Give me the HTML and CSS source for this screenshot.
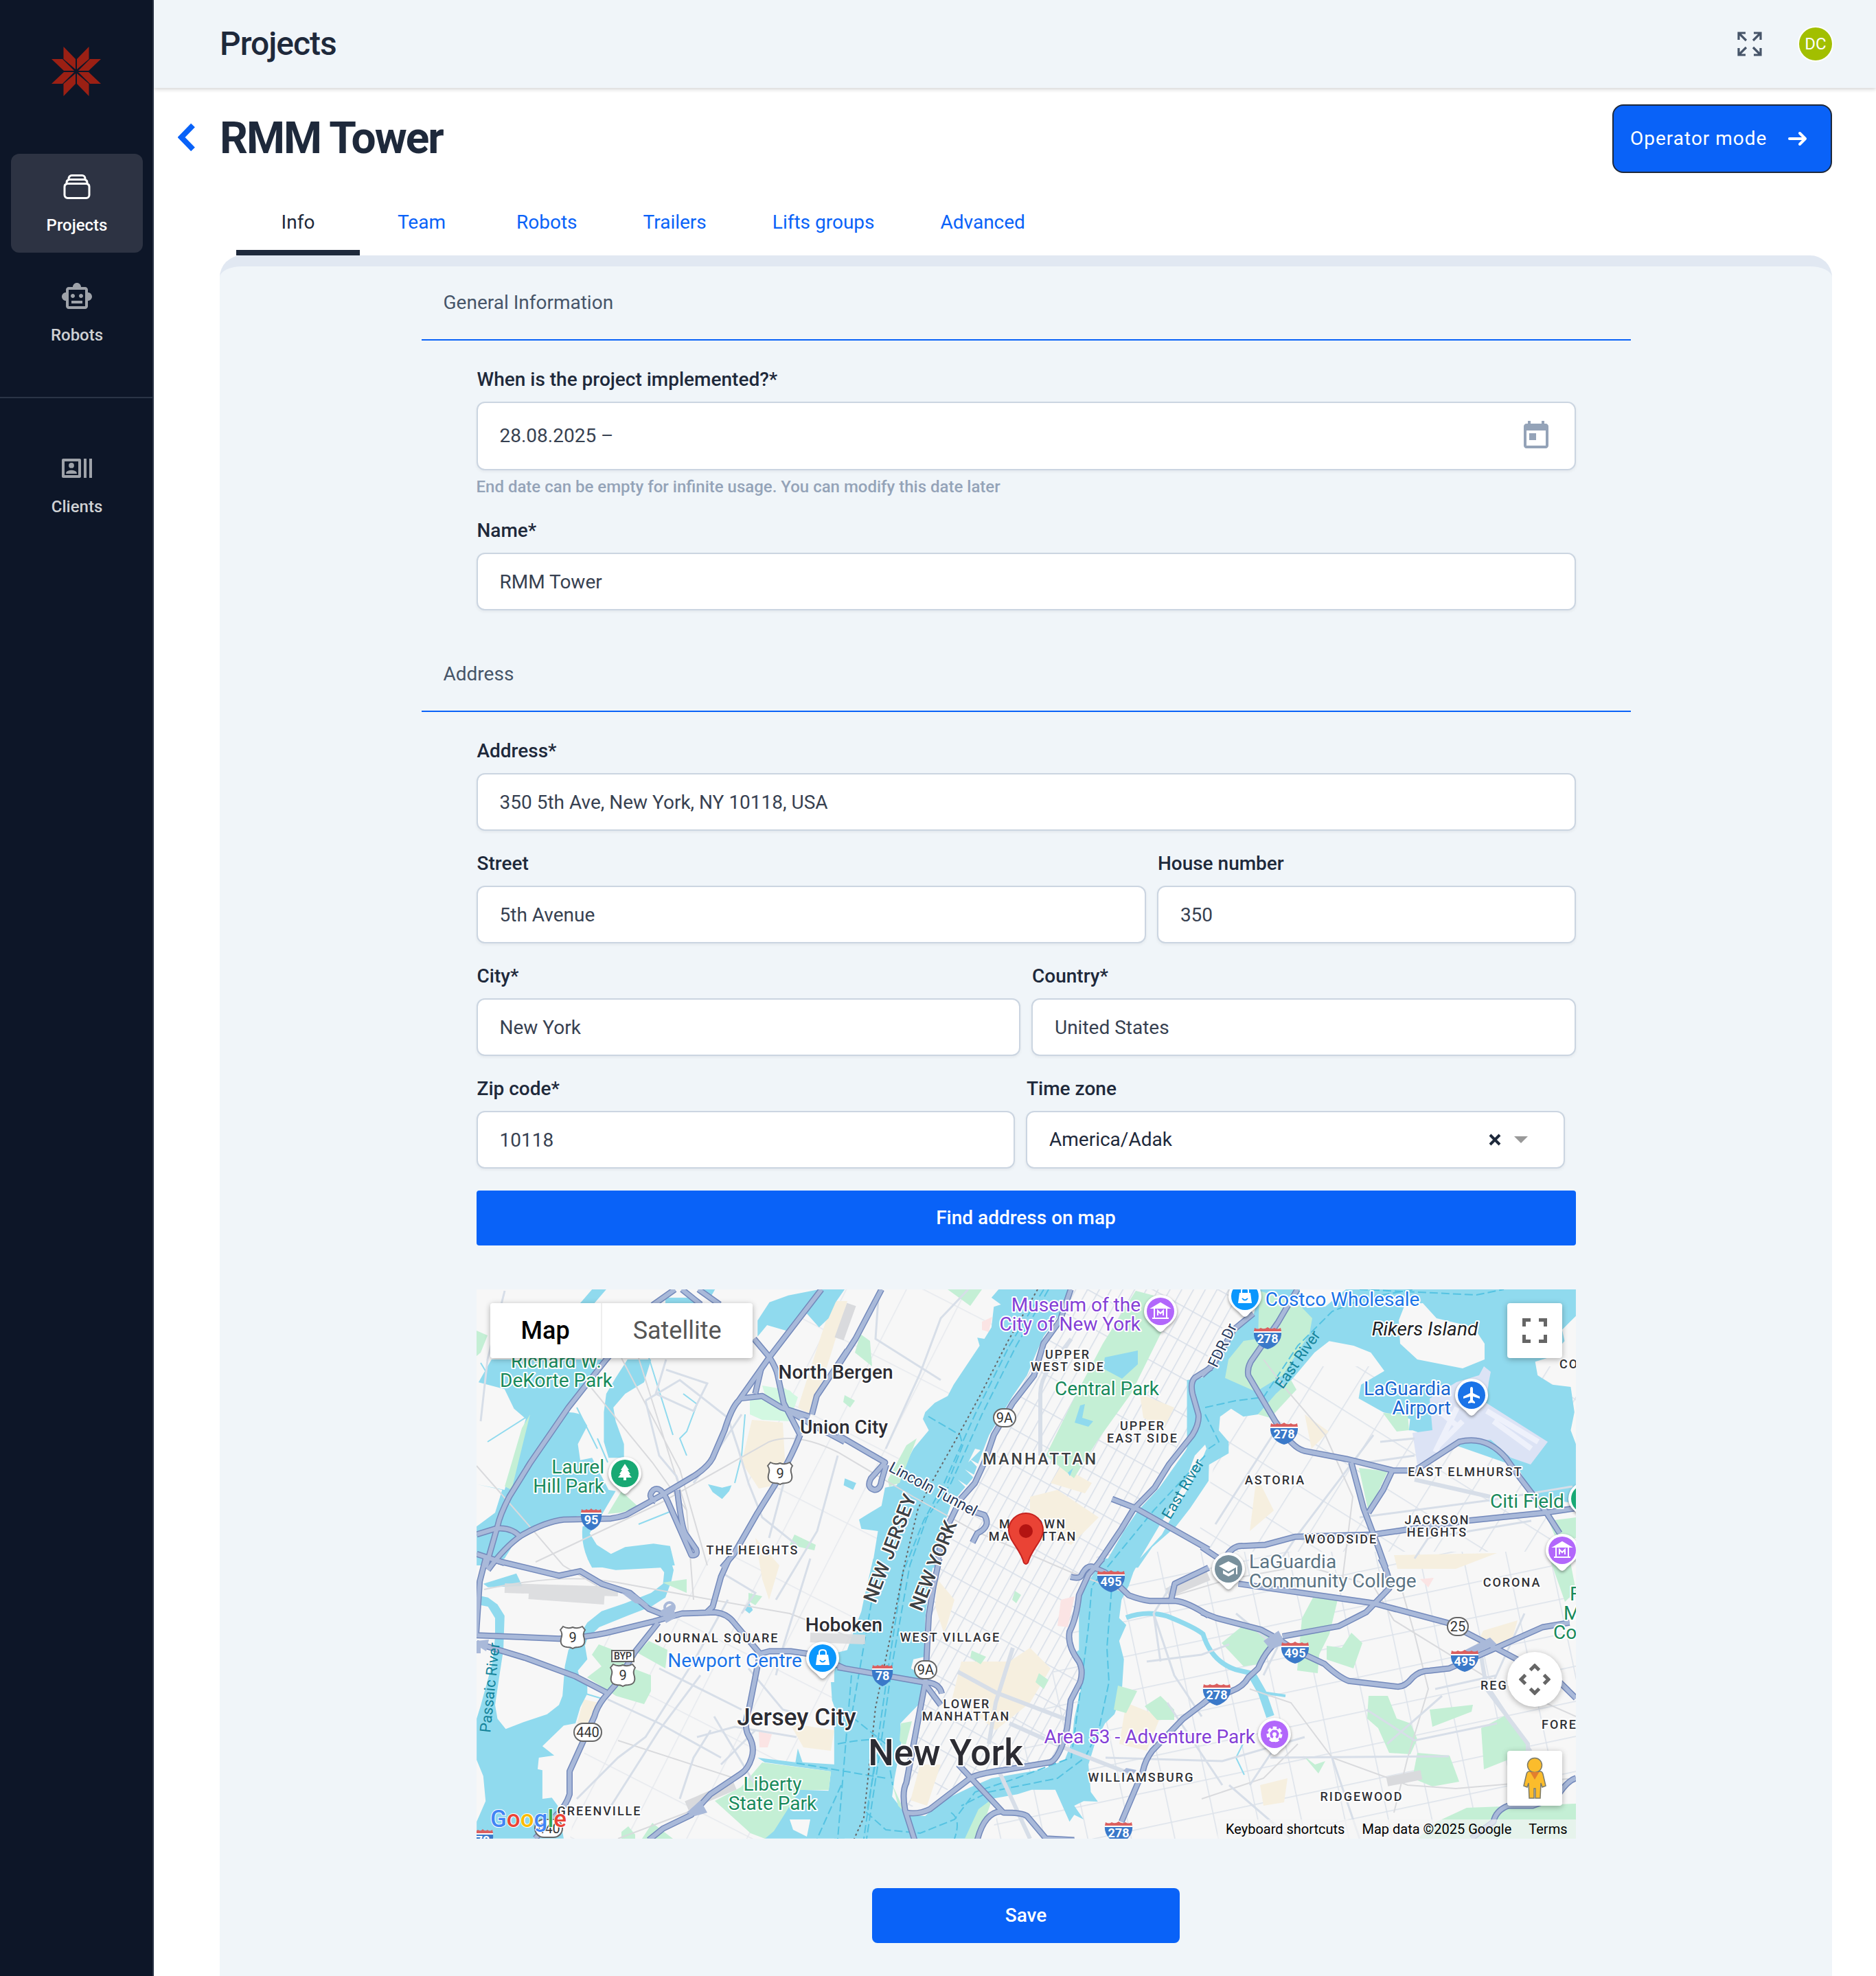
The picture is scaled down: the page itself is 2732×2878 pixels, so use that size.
FILE: index.html
```html
<!DOCTYPE html>
<html lang="en">
<head>
<meta charset="utf-8">
<meta name="viewport" content="width=device-width, initial-scale=1">
<title>RMM Tower – Projects</title>
<link rel="stylesheet" href="styles.css">
</head>
<body>
<aside class="sidebar">
  <a class="logo" href="#" aria-label="Home">
    <svg viewBox="-36 -36 72 72" width="72" height="72">
      <defs><g id="petals"><path d="M1-3V-18L18.500-36V-18ZM3-1L20-18H36L18-1Z"/></g></defs>
      <g fill="#9b2014"><use href="#petals"/><use href="#petals" transform="scale(-1 1)"/><use href="#petals" transform="scale(1 -1)"/><use href="#petals" transform="scale(-1 -1)"/></g>
    </svg>
  </a>
  <nav class="side-nav">
    <a class="side-item active" href="#">
      <svg class="icon48" viewBox="0 0 24 24" fill="none" stroke="currentColor" stroke-width="1.5" stroke-linecap="round" stroke-linejoin="round"><path d="M6 6.878V6a2.25 2.25 0 0 1 2.25-2.25h7.5A2.25 2.25 0 0 1 18 6v.878m-12 0c.235-.083.487-.128.75-.128h10.500c.263 0 .515.045.75.128m-12 0A2.25 2.25 0 0 0 4.500 9v.878m13.500-3A2.25 2.25 0 0 1 19.500 9v.878m0 0a2.246 2.246 0 0 0-.75-.128H5.250c-.263 0-.515.045-.75.128m15 0A2.25 2.25 0 0 1 21 12v6a2.250 2.250 0 0 1-2.250 2.250H5.250A2.250 2.250 0 0 1 3 18v-6c0-.98.626-1.813 1.500-2.122"/></svg>
      <span>Projects</span>
    </a>
    <a class="side-item" href="#">
      <svg class="icon48" viewBox="0 0 24 24" fill="currentColor"><path d="M20 9V7c0-1.100-.9-2-2-2h-3c0-1.660-1.340-3-3-3S9 3.340 9 5H6c-1.100 0-2 .9-2 2v2c-1.660 0-3 1.340-3 3s1.340 3 3 3v4c0 1.100.9 2 2 2h12c1.100 0 2-.9 2-2v-4c1.660 0 3-1.340 3-3s-1.340-3-3-3zm-2 10H6V7h12v12zm-9-6c-.83 0-1.500-.67-1.500-1.500S8.170 10 9 10s1.500.67 1.500 1.500S9.830 13 9 13zm7.500-1.500c0 .83-.67 1.500-1.500 1.500s-1.500-.67-1.500-1.500.67-1.500 1.500-1.500 1.500.67 1.500 1.500zM8 15h8v2H8v-2z"/></svg>
      <span>Robots</span>
    </a>
  </nav>
  <nav class="side-nav second">
    <a class="side-item" href="#">
      <svg class="icon48" viewBox="0 0 24 24" fill="currentColor"><path d="M21 5v14h2V5h-2zm-4 14h2V5h-2v14zM14 5H2c-.55 0-1 .45-1 1v12c0 .55.45 1 1 1h12c.55 0 1-.45 1-1V6c0-.55-.45-1-1-1zm-1 12H3V7h10v10z"/><circle cx="8" cy="9.940" r="1.950"/><path d="M11.890 15.350c0-1.300-2.590-1.950-3.890-1.950s-3.890.65-3.890 1.950V16h7.780v-.65z"/></svg>
      <span>Clients</span>
    </a>
  </nav>
</aside>

<div class="page">
  <header class="topbar">
    <p class="topbar-title">Projects</p>
    <button class="plain" type="button" aria-label="Full screen">
      <svg viewBox="0 0 36 36" width="36" height="36" fill="none" stroke="#475569" stroke-width="3.200"><path d="M2 12V2h10M2 2l11 11M24 2h10v10M34 2L23 13M2 24v10h10M2 34l11-11M34 24v10H24M34 34L23 23"/></svg>
    </button>
    <button class="avatar" type="button">DC</button>
  </header>

  <main>
    <div class="title-row">
      <a class="back" href="#" aria-label="Back"><svg viewBox="0 0 26 46" width="26" height="46" fill="none" stroke="#0962f8" stroke-width="8"><path d="M22 3.500L5 21l17 17.500"/></svg></a>
      <h1>RMM Tower</h1>
      <button class="operator" type="button">Operator mode
        <svg viewBox="0 0 28 24" width="28" height="24" fill="none" stroke="#fff" stroke-width="4" stroke-linejoin="round" stroke-linecap="round"><path d="M2 12h23M17 4l8 8-8 8"/></svg>
      </button>
    </div>
    <nav class="tabs">
      <a class="tab current" href="#">Info</a>
      <a class="tab" href="#">Team</a>
      <a class="tab" href="#">Robots</a>
      <a class="tab" href="#">Trailers</a>
      <a class="tab" href="#">Lifts groups</a>
      <a class="tab" href="#">Advanced</a>
    </nav>

    <form class="panel">
      <section class="section">
        <h2>General Information</h2>
        <div class="fields">
          <div class="field">
            <label for="dates">When is the project implemented?*</label>
            <div class="box date">
              <input id="dates" type="text" value="28.08.2025 –">
              <button class="plain" type="button" aria-label="Open calendar"><svg class="icon48" viewBox="0 0 24 24" fill="#94a3b8"><path d="M19 3h-1V1h-2v2H8V1H6v2H5c-1.110 0-1.990.9-1.990 2L3 19c0 1.100.89 2 2 2h14c1.100 0 2-.9 2-2V5c0-1.100-.9-2-2-2zm0 16H5V8h14v11zM7 10h5v5H7z"/></svg></button>
            </div>
            <p class="hint">End date can be empty for infinite usage. You can modify this date later</p>
          </div>
          <div class="field">
            <label for="name">Name*</label>
            <input class="box" id="name" type="text" value="RMM Tower">
          </div>
        </div>
      </section>

      <section class="section">
        <h2>Address</h2>
        <div class="fields">
          <div class="field">
            <label for="address">Address*</label>
            <input class="box" id="address" type="text" value="350 5th Ave, New York, NY 10118, USA">
          </div>
          <div class="pair wide-first">
            <div class="field"><label for="street">Street</label><input class="box" id="street" type="text" value="5th Avenue"></div>
            <div class="field"><label for="house">House number</label><input class="box" id="house" type="text" value="350"></div>
          </div>
          <div class="pair">
            <div class="field"><label for="city">City*</label><input class="box" id="city" type="text" value="New York"></div>
            <div class="field"><label for="country">Country*</label><input class="box" id="country" type="text" value="United States"></div>
          </div>
          <div class="pair inset">
            <div class="field"><label for="zip">Zip code*</label><input class="box" id="zip" type="text" value="10118"></div>
            <div class="field">
              <label for="zone">Time zone</label>
              <div class="select-wrap">
                <select class="box" id="zone"><option>America/Adak</option></select>
                <button class="plain clear" type="button" aria-label="Clear time zone"><svg viewBox="0 0 18 18" width="18" height="18" fill="none" stroke="#1e293b" stroke-width="4"><path d="M2 2l14 14M16 2L2 16"/></svg></button>
                <svg class="caret" viewBox="0 0 20 10" width="20" height="10" fill="#999"><path d="M0 0h20L10 10z"/></svg>
              </div>
            </div>
          </div>
          <button class="find" type="button">Find address on map</button>
        </div>
      </section>

      <div class="map">
        <svg class="map-canvas" viewBox="694 1878 1601 800" preserveAspectRatio="xMidYMid slice" role="img" aria-label="Map of New York">
          <defs>
            <pattern id="grid-mh" width="15" height="46" patternUnits="userSpaceOnUse" patternTransform="rotate(29)"><path d="M0 0V46M0 0H15" fill="none" stroke="#d7dee8" stroke-width="3"/></pattern>
            <pattern id="grid-nj" width="78" height="118" patternUnits="userSpaceOnUse" patternTransform="rotate(27)"><path d="M0 0V118M0 0H78" fill="none" stroke="#dfe3ea" stroke-width="3"/></pattern>
            <pattern id="grid-qn" width="56" height="64" patternUnits="userSpaceOnUse" patternTransform="rotate(32)"><path d="M0 0V64M0 0H56" fill="none" stroke="#dce2ea" stroke-width="3"/></pattern>
            <pattern id="grid-qs" width="62" height="50" patternUnits="userSpaceOnUse" patternTransform="rotate(-12)"><path d="M0 0V50M0 0H62" fill="none" stroke="#dce2ea" stroke-width="3"/></pattern>
            <g id="highways">
              <g transform="translate(690 1870) scale(.3444 .3333)">
                <path d="M850 24L760 90L560 330L400 540L240 780L150 930Q110 1010 100 1060L50 1240"/>
                <path d="M60 1250Q130 1150 200 1100Q300 1040 380 1030L580 1025Q640 1015 660 1000L800 920L930 840Q990 800 1010 760L1060 640Q1090 540 1120 510L1250 320L1470 24"/>
                <path d="M880 24L960 90M950 24L1040 90M1185 240L1250 320Q1280 370 1285 400L1310 520L1380 660M1190 480L1215 370M1130 500L1220 490L1300 540L1420 580M1340 560L1440 620L1568 690"/>
                <path d="M1580 290L1450 490L1430 570M1380 660Q1350 740 1290 850L1200 1000L1100 1180L1050 1240"/>
                <path d="M860 900Q880 1080 900 1100L940 1160Q950 1190 920 1185L820 950Q790 880 760 900Q730 930 770 950M12 1095L90 1070Q160 1060 200 1110M12 1180L130 1220"/>
              </g>
              <g transform="translate(1220 1870) scale(.3444 .3333)">
                <path d="M985 24L940 160L870 260L830 400L740 520L660 660L620 780L580 870L520 940L440 1110L420 1230"/>
                <path d="M185 24L75 240L0 360M0 660L200 780L140 850Q120 890 155 900Q180 900 185 860L205 790M560 990L620 1010Q650 1060 590 1090L570 1130"/>
                <path d="M1580 365L1510 410Q1490 430 1500 480L1525 570Q1530 610 1500 660L1400 790L1340 890L1250 985L1200 1070L1090 1240M1160 940L1260 980L1568 1160"/>
              </g>
              <g transform="translate(1750 1870) scale(.3571 .3333)">
                <path d="M390 24L310 170L200 340Q185 370 190 400L300 600Q370 720 420 730L590 765L780 815H870L1050 690Q1160 660 1240 760L1300 850L1400 990L1460 1090"/>
                <path d="M210 130L130 200L50 350L0 400M610 780L660 980L720 1150L750 1240M775 820L740 900L680 1000M100 1190Q130 1140 170 1145L260 1140L380 1105L700 1095L830 1075L1080 1035L1400 1000L1526 980M0 1150L70 1200"/>
              </g>
              <g transform="translate(690 2270) scale(.3444 .3333)">
                <path d="M50 0L25 100L10 330M100 10L360 75L450 55L540 110L660 150L740 220L800 245M12 335L360 350Q470 345 560 325L760 275L880 240L1020 235Q1070 240 1100 280L1210 415M780 280L680 410L600 550L550 610Q520 650 510 690L405 930V1030Q390 1080 350 1120L260 1223M12 370L220 435L430 515L560 585M1080 0L1045 80L1010 210L980 240M1215 415L1250 405H1340L1440 420L1568 480M1210 415L1165 650Q1140 730 1160 770Q1190 820 1175 870Q1160 920 1130 940L1000 1030L920 1120L800 1180L740 1230"/>
              </g>
              <g transform="translate(1220 2270) scale(.3444 .3333)">
                <path d="M430 0L405 120L385 250L370 540L330 760L290 980Q270 1020 285 1100L325 1230M290 1110Q340 1120 390 1095L560 960Q590 940 700 925L900 890Q940 870 970 740L985 620L1025 540Q1040 490 1020 450Q970 380 980 320Q1010 260 1020 160L1060 70L1120 0"/>
                <path d="M510 900L700 1110Q780 1110 800 1125L880 1223L1000 1230M590 1230Q620 1110 690 1105M985 80Q1020 90 1030 75Q1050 30 1075 35L1130 60L1230 160Q1280 180 1320 185H1430Q1480 190 1568 250M1410 180L1425 110L1568 40M1575 610L1460 700L1330 840Q1300 880 1290 930L1200 1150M0 475L360 540Q430 540 440 590M370 550L435 640"/>
              </g>
              <g transform="translate(1750 2270) scale(.3571 .3333)">
                <path d="M150 110L700 195L1000 280L1180 380L1460 540L1526 610M730 0Q770 80 765 130L670 235L560 295L330 340M0 235L60 260L240 310L310 350L380 400L500 460Q560 520 600 535L800 560Q830 560 860 520Q890 490 930 490L1010 480L1180 400L1390 300L1500 280M0 640L20 620L120 580Q170 560 190 520L230 480Q270 380 330 350M1526 960Q1490 970 1450 1040L1350 1080H1250Q1200 1100 1190 1150L1100 1223"/>
              </g>
            </g>
            <g id="poi-museum" fill="none" stroke="#fff" stroke-width="2"><path d="M-12-5L0-12L12-5Z" fill="#fff"/><path d="M-9-4V9M9-4V9M-12 10H12M-4 6V-1L0 3L4-1V6"/></g>
            <path id="pin" d="M-24 0A24 24 0 1 1 24 0C24 14 10 20 5 27Q0 33-5 27C-10 20-24 14-24 0Z" fill="#fff" filter="drop-shadow(0 2px 2px rgba(0,0,0,.4))"/>
            <g id="poi-bag"><path d="M-8-5H8L10 10H-10Z" fill="#fff"/><path d="M-5-4V-8Q-5-12 0-12T5-8V-4" fill="none" stroke="#fff" stroke-width="2"/><path d="M-4 3Q0 8 4 3" fill="none" stroke="#0b97fd" stroke-width="2"/></g>
            <g id="interstate"><path d="M-20-9H20Q21 0 14 8Q8 14 0 16Q-8 14-14 8Q-21 0-20-9Z" fill="#3a79c9"/><path d="M-19-15Q-14-12-10-15Q-5-12 0-16Q5-12 10-15Q14-12 19-15L20-10H-20Z" fill="#db5f5f"/><path d="M-20-9H20" stroke="#fff" stroke-width="2"/></g>
            <g id="interstate-sm"><path d="M-15-9H15Q16 1 11 8Q7 13 0 16Q-7 13-11 8Q-16 1-15-9Z" fill="#3a79c9"/><path d="M-14-15Q-10-12-7-15Q-3-12 0-16Q3-12 7-15Q10-12 14-15L15-10H-15Z" fill="#db5f5f"/><path d="M-15-9H15" stroke="#fff" stroke-width="2"/></g>
            <path id="us-route" d="M-14-16Q-7-12 0-15Q7-12 14-16L18-11Q14-6 17 2Q19 13 8 14Q3 14 0 16Q-3 14-8 14Q-19 13-17 2Q-14-6-18-11Z" fill="#fff" stroke="#666" stroke-width="2"/>
          </defs>

          <rect x="694" y="1878" width="1601" height="800" fill="#f7f7f7"/>
          <path fill="url(#grid-nj)" opacity=".7" d="M1180 1878H1480L1300 2300L1280 2678H830L880 2380L1060 2250Z"/>
          <path fill="url(#grid-qn)" d="M1800 1990H2295V2260H1740Z"/>
          <path fill="url(#grid-qs)" d="M1600 2260H2295V2678H1440Z"/>
          <path fill="url(#grid-mh)" d="M1560 1878L1500 1990L1425 2140L1360 2290L1345 2450L1310 2640L1415 2590L1540 2560L1572 2440L1560 2380L1605 2270L1740 2070V2010L1810 1878Z"/>

          <g class="commercial">
            <path d="M1212 1895H1234L1192 2030L1180 2060L1162 2050Z"/>
            <path d="M1095 2068L1140 2072L1145 2160L1105 2168L1080 2130Z"/>
            <path d="M1500 2180L1540 2170L1600 2210L1560 2250L1500 2220Z"/>
            <path d="M1545 2135L1590 2160L1580 2175L1530 2160Z"/>
            <path d="M1660 2030L1710 2050L1695 2080L1665 2065Z"/>
            <path d="M1385 2480L1400 2420L1470 2420L1500 2400L1530 2430L1500 2480L1450 2520L1400 2480Z"/>
            <path d="M1340 2570L1370 2570L1350 2630L1326 2622Z"/>
            <path d="M1365 2300L1390 2330L1375 2380L1362 2340Z"/>
            <path d="M1100 2240L1135 2280L1120 2330L1110 2300Z"/>
            <path d="M1830 2150L1820 2230L1855 2200Z"/>
            <path d="M1900 2060L1935 2085L1910 2110Z"/>
            <path d="M2030 2265L2180 2262L2120 2285H2035Z"/>
            <path d="M2160 2375L2210 2360L2200 2395L2150 2395Z"/>
            <path d="M1640 2480L1690 2500L1670 2550L1630 2540Z"/>
            <path d="M1835 2600L1875 2590L1870 2625L1840 2630Z"/>
            <path d="M1150 2510L1215 2520L1210 2550L1170 2545Z"/>
            <path d="M850 2475L872 2480L860 2510L840 2512Z"/>
          </g>
          <g fill="#fbe4e4">
            <path d="M1430 1925L1445 1918L1440 1940L1430 1937Z"/><path d="M1545 2330L1565 2325L1555 2370L1540 2368Z"/><path d="M2068 2300L2088 2298L2080 2312Z"/><path d="M1105 2522L1124 2526L1118 2545H1106Z"/>
          </g>

          <g class="water">
            <g transform="translate(690 1870) scale(.3444 .3333)">
              <path d="M20 430L75 330H560L430 480L380 560Q430 560 450 570L480 620L440 700L450 770L500 760L570 900L600 905L540 1010L440 1015L300 1050L190 1100L130 1200L70 1230H12V1060L90 1000L120 900L12 875L130 900L220 590L170 545L130 460Z"/>
              <path d="M650 330H750L720 430L640 480L590 540L600 600L635 700V760H570L550 690V560L560 480L600 410Z"/>
              <path d="M460 1060L510 1050L490 1090L520 1140L580 1180L640 1150L760 1135L830 1145L850 1230L500 1240Q450 1150 460 1060Z"/>
              <path d="M500 24H560L510 84H450Z"/>
              <path d="M810 60H920L960 84H810Z"/><path d="M960 24H1020L1000 60Z"/>
              <path d="M1200 230V160L1250 80L1330 50L1460 24H1568L1530 80L1500 150L1460 190L1400 120L1340 210L1240 180Z"/>
              <path d="M990 875L1050 890L1090 880L1080 905L1050 940L1010 910Z"/>
            </g>
            <g transform="translate(1220 1870) scale(.3444 .3333)">
              <path d="M680 24L650 60L690 90L660 100L650 190L620 240L590 235L600 270L490 440L465 490L410 520L370 560L360 590L385 640L320 720L270 820L250 880L200 890L185 970L120 1010L90 1030L100 1070L170 1080L145 1240H420L430 1110L480 960L570 850L610 740L640 660L740 490L800 400L840 300L870 230L940 130L980 24Z"/>
              <path d="M1580 390L1520 430L1540 600L1470 730L1360 890L1270 990L1210 1080L1120 1240H1270L1330 1150L1430 1060L1490 980L1568 860Z"/>
              <path d="M30 850L78 870L65 900L25 880Z"/>
            </g>
            <g transform="translate(1750 1870) scale(.3571 .3333)">
              <path d="M240 24H1526V140L1470 200L1480 250L1420 320L1360 340L1370 400L1430 440L1505 450L1520 560L1505 640L1526 700V960L1350 930L1290 800L860 640H845L850 590L740 560L640 500L650 440L745 380L690 300L620 270L520 250L460 300L350 440L230 570L170 580L120 545L75 580L70 640L110 690V740L30 790L-60 920V420L0 410L60 360L130 220L210 140Z"/>
            </g>
            <g transform="translate(690 2270) scale(.3444 .3333)">
              <path d="M480 0L500 30L600 50L790 40L805 60L800 110L750 150L640 195L540 230L480 280L450 330L400 400L385 470L375 600L360 640L310 680L210 715L135 745L100 700L90 640L110 500L125 400L130 250L100 200L60 170L12 160V200L60 210L90 260V340L80 450L30 640L12 700V880L40 950L50 1060L12 1150V1223H380L355 1080L330 1045L290 1050V925L270 920L275 870L340 860L290 820L380 730L430 720L450 650L480 590V540L450 530L440 490L480 440L470 380L480 350L530 300L650 250L750 210L810 170L835 100L845 50L830 0Z"/>
              <path d="M40 110L180 65L205 120L60 125Z"/><path d="M1200 870L1360 890L1370 830L1390 890L1530 900V800L1568 740V1223H1230L1300 1080L1380 1010L1500 1015L1510 930L1230 890Z"/>
              <path d="M1510 540H1580V750L1540 690L1515 620Z"/><path d="M1140 220L1165 195L1180 225L1165 240Z"/>
            </g>
            <g transform="translate(1220 2270) scale(.3444 .3333)">
              <path d="M150 0L110 180L100 230L60 340L40 400L0 410L-15 500V1223H590L620 1130L650 1050L760 1030L820 1010H920L950 1080L980 1150L1000 1120L1040 1140L1000 1080L1040 1060L1100 1062L1070 1020L1060 900L1090 800L1130 720L1170 680L1200 600L1210 440L1190 360L1220 290L1190 260L1200 180L1230 120L1250 60L1280 0H1125L1040 130L1020 200V400L990 420L1020 480L1030 560L1000 700L990 800L960 880L870 920L650 960L560 1000L440 1060L370 1125L290 1120L230 1040L240 960L270 800L265 720L340 640L355 600L370 520L310 480L320 440L365 430L370 260L390 100L410 0Z"/>
            </g>
          </g>
          <g fill="none" stroke="#90daee" stroke-width="7">
            <path d="M1640 2356Q1670 2345 1700 2354Q1740 2370 1752 2380Q1764 2420 1800 2432L1822 2437"/>
            <path d="M1822 2437L1838 2465L1850 2500" stroke-width="12"/><path d="M1838 2465L1872 2470" stroke-width="4"/>
            <g stroke-width="2"><path d="M945 1978L980 2090M995 2030L1015 2045L1000 2085L990 2095L1000 2120M870 2095L885 2130M840 2050L870 2110M710 2100L765 2065M1085 2060L1080 2120L1070 2160M700 1985L715 2010M930 2220L980 2200"/><path d="M1810 2540L1800 2560L1812 2585M830 2460L880 2475"/></g>
          </g>

          <g fill="#f7f7f7">
            <path d="M1755 2104L1740 2120L1725 2160L1660 2270L1692 2235L1740 2150L1757 2110Z"/>
            <path d="M2046 1900L2072 1898L2092 1920L2146 1933L2162 1957V1980L2130 1993L2064 1980L2039 1957L2037 1923Z"/>
            <path d="M1893 1878H1960L1930 1903L1904 1905L1893 1897Z"/>
            <path d="M1150 2650L1180 2650L1175 2675L1155 2665Z"/><path d="M1420 2110L1428 2112L1410 2130ZM1412 2125L1430 2135L1428 2142ZM1405 2140L1422 2150V2156ZM1395 2155L1412 2166V2172Z"/>
          </g>
          <g class="park">
            <path d="M1834 1880L1889 1897L1911 1920L1907 1943L1868 2003L1829 2027L1784 2007L1789 1980L1811 1953L1832 1950Z"/>
            <path d="M1654 1880L1692 1890L1695 1933L1647 2030L1599 2097L1564 2153L1523 2120L1564 2037L1606 1957Z"/>
            <path d="M1979 2138L2021 2143L1993 2203Z"/><path d="M2014 2058L2050 2060L2052 2083L2034 2085Z"/>
            <path d="M1858 2030L1880 2010L1888 2024L1850 2065L1832 2060Z"/>
            <path d="M1912 2327L1948 2330L1936 2380L1921 2410L1919 2437L1889 2433L1896 2357Z"/>
            <path d="M1779 2393L1807 2370L1854 2383L1839 2423L1811 2427Z"/>
            <path d="M1932 2397L1954 2400L1968 2378L1984 2393L1971 2430L1932 2417Z"/>
            <path d="M1993 2470H2021L2034 2503L2054 2510L2064 2533L2054 2555L2023 2553L2007 2517L1991 2503Z"/>
            <path d="M2082 2490L2145 2483L2143 2493L2086 2515Z"/><path d="M2193 2498L2229 2550L2161 2577L2157 2517Z"/>
            <path d="M2064 2553L2111 2557L2125 2595L2086 2602L2057 2590Z"/><path d="M2093 2653L2136 2633L2295 2627V2678H2064Z"/>
            <path d="M2257 2270H2286L2295 2317L2279 2333ZM2255 2215L2295 2210V2240L2270 2250Z"/>
            <path d="M872 2395L893 2403L914 2427L948 2440V2463L938 2482L897 2470L855 2443L876 2427L862 2410Z"/>
            <path d="M945 2390L972 2403L969 2430L928 2407Z"/>
            <path d="M1110 2567L1210 2580L1207 2607H1165L1127 2667L1114 2678L1093 2670L1041 2623L1079 2603Z"/>
            <path d="M694 1938L710 1945L700 1970L694 1975ZM885 2205L905 2172L930 2195L905 2203ZM735 2165L760 2080L772 2060L745 2170ZM1380 1878H1430L1413 1902Z"/>
            <path d="M1253 1943L1267 1953L1270 1990L1245 1970ZM1230 2032L1245 2040L1238 2050L1228 2042ZM1293 2155L1320 2105L1335 2095L1310 2160L1295 2165Z"/>
            <path d="M1628 2455L1656 2463L1640 2495L1622 2490ZM1667 2485L1690 2470L1710 2490V2505L1685 2505ZM1415 2404L1436 2413L1428 2424L1413 2414ZM1513 2437L1527 2447L1520 2460L1508 2450ZM1478 2317L1487 2323L1480 2335L1474 2330Z"/>
            <path d="M1312 2510L1328 2507L1318 2545L1310 2535ZM1300 2600L1318 2640L1308 2630ZM1425 2635L1445 2620L1425 2678H1405ZM1898 2557L1915 2570L1930 2565L1920 2583ZM965 2305L1000 2300L1000 2320ZM1090 2320L1110 2325L1100 2338L1090 2332ZM905 2668L915 2660L925 2672V2678H905ZM950 2655L980 2678H935Z"/>
            <path d="M1157 2235L1188 2250L1186 2258L1150 2250Z"/>
            <path fill="#d3f8e2" d="M1092 2040L1140 2020L1162 2035L1150 2070L1110 2068L1092 2060ZM1110 2018L1150 2025L1160 2035L1150 2050L1115 2035Z"/>
          </g>
          <g fill="#90daee"><path d="M1609 1977L1657 1967V1987L1634 2008L1606 1993ZM1573 2047L1580 2045L1576 2065L1592 2070L1585 2078L1565 2072ZM1555 2145L1563 2138L1558 2150Z"/></g>
          <path d="M2057 2087L2086 2083L2082 2037L2121 2013L2154 2003L2161 1990L2171 1998L2168 2013L2164 2043L2254 2100L2229 2133L2200 2123L2171 2097L2129 2100L2064 2133Z" fill="#dce3f5"/>
          <path d="M2122 2050L2090 2115M2130 2070L2095 2105M2095 2055L2120 2075M2165 2055L2240 2100M2175 2070L2230 2110" fill="none" stroke="#eef1fb" stroke-width="8"/>

          <g class="ferry">
            <path d="M1527 1878L1480 1960L1430 2060L1385 2160L1350 2210L1325 2280L1300 2420L1280 2560L1262 2678M1520 1878L1470 1960L1420 2060L1375 2160L1345 2215L1315 2290L1295 2420L1272 2580L1258 2678M1352 2063L1398 2090L1402 2105L1380 2160"/>
            <path d="M1755 2120L1680 2200L1590 2310L1585 2370L1575 2450L1560 2560L1480 2590L1420 2610L1390 2650L1340 2670L1290 2665L1262 2640L1280 2540M1620 2300L1612 2400L1615 2450L1600 2520L1580 2560L1540 2590L1440 2610L1400 2630M1385 2640Q1400 2650 1390 2678M1755 2050L1800 2040L1840 2035L1890 1960L1940 1910L1990 1890L2060 1878M1755 2060L1775 2100L1760 2110M1980 1878L2150 1886L2190 1878"/>
            <path d="M1240 2440L1220 2678M1275 2300L1240 2500L1290 2540L1300 2600M1160 2568L1290 2590M1220 2540Q1270 2530 1300 2535M1225 2600L1190 2678"/>
          </g>
          <path class="state-line" d="M1511 1878L1468 1953L1427 2033L1392 2097L1358 2157L1337 2197L1317 2280L1296 2387L1275 2487L1258 2647L1244 2678"/>

          <g class="rail">
            <path d="M694 2135L760 2210L820 2280L870 2310M860 2020L950 2130L1000 2200L1010 2330M905 1978L990 2140L1030 2280M930 1978L1000 2200M780 2275L960 2190L1120 2100Q1160 2085 1220 2115L1330 2180L1420 2230L1560 2290L1680 2335M705 2315Q820 2290 900 2305T1150 2350L1240 2385"/>
            <path d="M1840 1980L1870 2020L1930 2090L1970 2180L1955 2300M1690 2330L1790 2300L1900 2280L2000 2310L2030 2360L2160 2440L2295 2500M1820 2460L1880 2480L1940 2560L2050 2600L2120 2605L2295 2590M900 2535L1070 2590L1000 2640L900 2678M1750 2620L1840 2590L1890 2540M2030 2640L2050 2560L2080 2460L2060 2380L2040 2310"/>
            <path stroke-width="14" d="M735 2313L900 2318M770 2322L880 2330M1180 2385L1260 2388" opacity=".9"/>
            <path stroke-width="14" d="M1240 1900L1222 1950M1700 2320L1760 2295M1000 2630L1070 2600M2020 2595L2070 2585"/>
          </g>
          <g class="street">
            <path d="M970 1980L955 2030L1010 2055L1030 2015L970 1995M940 2040L960 2120L985 2150L990 2165M940 2040L990 2010L1060 2065L1075 2110L1090 2160L1110 2210L1160 2250M1080 2060L1040 2120L1010 2160M1160 2090L1120 2240M1280 1878L1275 1950L1370 2010M1410 1878L1370 1920L1340 2000L1290 2110M1220 2120L1190 2230L1130 2330"/>
            <path d="M700 2070L710 1980L735 1880M885 2475L960 2510L1050 2560M840 2620L900 2560L940 2530L1010 2420L1060 2330M890 2630L960 2520L1020 2440M1015 2530L1070 2515L1160 2530M1040 2500L1100 2600M1050 2570L1100 2520M990 2620L1010 2560L1035 2520M1090 2430L1140 2490L1175 2500M960 2430L1080 2490M1180 2270L1140 2400L1130 2440M1050 2290L1100 2320L1080 2350"/>
            <path d="M2010 2100L2060 2095M1990 2130L2060 2120M1980 2210L2170 2185L2290 2165M2060 2270L2080 2240L2230 2215M1860 2280L1890 2235L2000 2090M1770 2220L1860 2080M1990 2490L2060 2535L2180 2510M1850 2560L2110 2558M2090 2460L2180 2440M2220 2350L2170 2460L2230 2550"/>
            <path stroke-width="6" d="M1395 2435L1450 2465L1555 2505M1470 2510L1560 2550L1650 2585M1515 2120V2030Q1515 2010 1530 1990L1560 1950M1455 2580L1500 2678M1475 2400L1450 2480L1440 2540M2155 2400L2165 2460L2225 2540V2560L2200 2580M2060 2155L2170 2180"/>
            <path d="M1690 2420L1680 2350L1705 2310M1680 2350L1710 2440L1750 2500M1670 2420L1750 2410L1790 2395M1800 2350L1860 2400L1840 2440M1790 2600L1880 2678M1820 2600L1860 2540M1980 2678L1940 2560M2020 2540L2100 2470M1610 2560L1780 2565L1900 2530M1700 2480L1780 2600"/>
          </g>
          <use class="road-casing" href="#highways"/>
          <use class="road-fill" href="#highways"/>
          <g fill="#a9b9d9"><path d="M905 2320L925 2322L945 2338L925 2335ZM694 2390L712 2388L708 2405L700 2400V2408H694ZM1000 2640L1020 2622L1030 2640L1012 2645ZM1840 2390L1862 2375L1872 2395L1850 2402ZM2130 2405L2170 2385L2180 2395L2145 2410ZM1640 2575L1655 2578L1650 2585L1635 2580ZM962 2346L980 2336L984 2356L970 2364Z"/><circle cx="975" cy="2341" r="7" fill="none" stroke="#a9b9d9" stroke-width="4"/></g>

          <g class="label region">
            <text x="1096" y="2264">THE HEIGHTS</text><text x="1555" y="1979">UPPER</text><text x="1555" y="1997">WEST SIDE</text>
            <text x="1664" y="2083">UPPER</text><text x="1664" y="2101">EAST SIDE</text>
            <text x="1504" y="2226">MIDTOWN</text><text x="1504" y="2244">MANHATTAN</text>
            <text x="2134" y="2150">EAST ELMHURST</text><text x="1857" y="2162">ASTORIA</text>
            <text x="2093" y="2220">JACKSON</text><text x="2093" y="2238">HEIGHTS</text><text x="1953" y="2248">WOODSIDE</text>
            <text x="2202" y="2311">CORONA</text><text x="1983" y="2623">RIDGEWOOD</text><text x="1662" y="2595">WILLIAMSBURG</text>
            <text x="1384" y="2391">WEST VILLAGE</text><text x="1408" y="2488">LOWER</text><text x="1407" y="2506">MANHATTAN</text>
            <text x="1044" y="2392">JOURNAL SQUARE</text><text x="873" y="2644">GREENVILLE</text>
            <g class="from-start"><text x="2271" y="1993">CO</text><text x="2156" y="2461">REGO</text><text x="2245" y="2518">FORE</text></g>
          </g>
          <text class="label borough" x="1515" y="2133">MANHATTAN</text>
          <g class="label town">
            <text x="1217" y="2008">North Bergen</text><text x="1229" y="2088">Union City</text><text x="1229" y="2376">Hoboken</text>
            <text class="city" x="1160" y="2513">Jersey City</text><text class="metro" x="1377" y="2571">New York</text>
            <text class="state" transform="translate(1275 2336) rotate(-69)">NEW JERSEY</text>
            <text class="state" transform="translate(1342 2348) rotate(-68)">NEW YORK</text>
          </g>
          <g class="label green">
            <text x="810" y="1992">Richard W.</text><text x="810" y="2020">DeKorte Park</text>
            <text x="1612" y="2032">Central Park</text><text x="1125" y="2608">Liberty</text><text x="1125" y="2636">State Park</text>
            <g class="to-end"><text x="880" y="2146">Laurel</text><text x="880" y="2174">Hill Park</text></g>
            <g class="from-start"><text x="2170" y="2196">Citi Field</text><text x="2286" y="2331">F</text><text x="2277" y="2359">M</text><text x="2262" y="2387">Co</text></g>
          </g>
          <g class="label violet to-end"><text x="1661" y="1910">Museum of the</text><text x="1661" y="1938">City of New York</text><text x="1828" y="2539">Area 53 - Adventure Park</text></g>
          <g class="label blue"><text x="1955" y="1902">Costco Wholesale</text><text x="1070" y="2428">Newport Centre</text><g class="to-end airport"><text x="2113" y="2032">LaGuardia</text><text x="2113" y="2060">Airport</text></g></g>
          <g class="label slate from-start"><text x="1819" y="2284">LaGuardia</text><text x="1819" y="2312">Community College</text></g>
          <text class="label island" x="2075" y="1945">Rikers Island</text>
          <g class="label river from-start">
            <text transform="translate(1704 2214) rotate(-59)">East River</text>
            <text transform="translate(1868 2024) rotate(-55)">East River</text>
            <text transform="translate(714 2524) rotate(-84)">Passaic River</text>
          </g>
          <g class="label road-name from-start">
            <text transform="translate(1293 2142) rotate(28)">Lincoln Tunnel</text>
            <text transform="translate(1772 1993) rotate(-64)">FDR Dr</text>
          </g>

          <g class="shield">
            <g transform="translate(1846 1949)"><use href="#interstate"/><text y="7">278</text></g>
            <g transform="translate(1870 2088)"><use href="#interstate"/><text y="7">278</text></g>
            <g transform="translate(1618 2303)"><use href="#interstate"/><text y="7">495</text></g>
            <g transform="translate(1886 2407)"><use href="#interstate"/><text y="7">495</text></g>
            <g transform="translate(2133 2419)"><use href="#interstate"/><text y="7">495</text></g>
            <g transform="translate(1772 2468)"><use href="#interstate"/><text y="7">278</text></g>
            <g transform="translate(1629 2669)"><use href="#interstate"/><text y="7">278</text></g>
            <g transform="translate(861 2213)"><use href="#interstate-sm"/><text y="7">95</text></g>
            <g transform="translate(1285 2440)"><use href="#interstate-sm"/><text y="7">78</text></g>
            <g transform="translate(703 2680)"><use href="#interstate-sm"/><text y="7">78</text></g>
          </g>
          <g class="shield dark">
            <g transform="translate(1136 2146)"><use href="#us-route"/><text y="7">9</text></g>
            <g transform="translate(834 2385)"><use href="#us-route"/><text y="7">9</text></g>
            <g transform="translate(907 2440)"><use href="#us-route"/><text y="7">9</text></g>
            <g transform="translate(907 2412)"><rect x="-16" y="-8" width="32" height="16" fill="#fff" stroke="#666" stroke-width="2"/><text class="small" y="5">BYP</text></g>
            <g transform="translate(1463 2065)"><rect class="oval" x="-16" y="-13" width="32" height="26" rx="13"/><text y="7">9A</text></g>
            <g transform="translate(1348 2432)"><rect class="oval" x="-16" y="-13" width="32" height="26" rx="13"/><text y="7">9A</text></g>
            <g transform="translate(2123 2369)"><rect class="oval" x="-15" y="-13" width="30" height="26" rx="13"/><text y="7">25</text></g>
            <g transform="translate(856 2523)"><rect class="oval" x="-20" y="-13" width="40" height="26" rx="13"/><text y="7">440</text></g>
            <g transform="translate(799 2663)"><rect class="oval" x="-20" y="-13" width="40" height="26" rx="13"/><text y="7">440</text></g>
          </g>

          <g transform="translate(910 2146)"><use href="#pin"/><circle r="20" fill="#18a974"/><path d="M0-14L6-5H4L8 1H6L10 6H2V10H-2V6H-10L-6 1H-8L-4-5H-6Z" fill="#fff"/></g>
          <g transform="translate(1690 1910)"><use href="#pin"/><circle r="20" fill="#b267fb"/><use href="#poi-museum"/></g>
          <g transform="translate(2275 2258)"><use href="#pin"/><circle r="20" fill="#b267fb"/><use href="#poi-museum"/></g>
          <g transform="translate(1813 1888)"><use href="#pin"/><circle r="20" fill="#0b97fd"/><use href="#poi-bag"/></g>
          <g transform="translate(1198 2415)"><use href="#pin"/><circle r="20" fill="#0b97fd"/><use href="#poi-bag"/></g>
          <g transform="translate(2143 2032)"><use href="#pin"/><circle r="20" fill="#1a73e8"/><path d="M0-12Q2-12 2-9V-3L12 2V5L2 2V7L5 10V12L0 11L-5 12V10L-2 7V2L-12 5V2L-2-3V-9Q-2-12 0-12Z" fill="#fff"/></g>
          <g transform="translate(2308 2183)"><use href="#pin"/><circle r="20" fill="#18a974"/></g>
          <g transform="translate(1789 2285)"><use href="#pin"/><circle r="20" fill="#78909c"/><path d="M0-11L14-4L0 4L-14-4ZM-8 2L0 7L8 2V7L0 11L-8 7Z" fill="#fff"/><path d="M12-4V8" stroke="#fff" stroke-width="2"/></g>
          <g transform="translate(1856 2526)"><use href="#pin"/><circle r="20" fill="#b267fb"/><circle r="9" fill="none" stroke="#fff" stroke-width="5" stroke-dasharray="5 3"/><circle r="8" fill="none" stroke="#fff" stroke-width="2"/><circle r="3" fill="#fff"/><path d="M0 0L-5 11H5Z" fill="#fff"/></g>
          <g transform="translate(1494 2230)"><path d="M0-26A25 25 0 0 1 25-1C25 14 8 26 3 46Q0 50-3 46C-8 26-25 14-25-1A25 25 0 0 1 0-26Z" fill="#ea4335" stroke="#c5221f" stroke-width="2"/><circle r="10" fill="#b31412"/></g>
          <text class="brand" x="714" y="2661"><tspan fill="#4285f4">G</tspan><tspan fill="#ea4335">o</tspan><tspan fill="#fbbc04">o</tspan><tspan fill="#4285f4">g</tspan><tspan fill="#34a853">l</tspan><tspan fill="#ea4335">e</tspan></text>
        </svg>

        <div class="map-types">
          <button class="on" type="button">Map</button>
          <button type="button">Satellite</button>
        </div>
        <button class="map-btn full" type="button" aria-label="Toggle fullscreen view"><svg viewBox="0 0 36 36" width="36" height="36" fill="none" stroke="#666" stroke-width="5"><path d="M2.500 12V2.500H12M24 2.500h9.500V12M33.500 24v9.500H24M12 33.500H2.500V24"/></svg></button>
        <button class="map-btn camera" type="button" aria-label="Map camera controls"><svg viewBox="0 0 46 46" width="46" height="46" fill="none" stroke="#666" stroke-width="5"><path d="M16.500 9.500L23 3l6.500 6.500M16.500 36.500L23 43l6.500-6.500M9.500 16.500L3 23l6.500 6.500M36.500 16.500L43 23l-6.500 6.500"/></svg></button>
        <button class="map-btn pegman" type="button" aria-label="Street View"><svg viewBox="0 0 34 62" width="34" height="62" stroke="#7a7a6a" stroke-width="1.500" fill="#fbbc2c"><path d="M9 21H25Q28 21 29 25L33 42L28 44L26 38L25 60H18V46H16V60H9L8 38L6 44L1 42L5 25Q6 21 9 21Z"/><circle cx="17" cy="12" r="10.500"/><path d="M10.500 22H23.500L17 33Z" fill="#e27f2e" stroke="none"/></svg></button>
        <div class="map-legal">
          <button class="plain" type="button">Keyboard shortcuts</button>
          <span>Map data ©2025 Google</span>
          <a href="#">Terms</a>
        </div>
      </div>

      <button class="save" type="submit">Save</button>
    </form>
  </main>
</div>
</body>
</html>
```
FILE: styles.css
```css
* { box-sizing: border-box; }

body {
  margin: 0;
  min-height: 100vh;
  display: flex;
  background: #fff;
  color: #1e293b;
  font-family: Roboto, "Liberation Sans", sans-serif;
  font-size: 28px;
  line-height: 40px;
}

h1, h2, p { margin: 0; }
a { text-decoration: none; }
button, input, select { font: inherit; color: inherit; }
button { cursor: pointer; border: 0; }
svg { display: block; }

.plain { background: none; padding: 0; }
.icon48 { width: 48px; height: 48px; }

/* Sidebar */
.sidebar {
  flex: 0 0 224px;
  background: #0d1628;
  border-right: 2px solid #2a3446;
}
.logo { display: flex; justify-content: center; padding: 68px 0 84px; }
.side-nav { display: flex; flex-direction: column; gap: 16px; padding: 0 14px 50px 16px; }
.side-nav.second { border-top: 2px solid #2a3446; padding-top: 54px; }
.side-item {
  display: flex;
  flex-direction: column;
  align-items: center;
  gap: 16px;
  padding: 24px 0;
  border-radius: 12px;
  color: #9ea2a9;
  font-size: 24px;
  font-weight: 500;
  line-height: 32px;
}
.side-item span { color: #cfd1d4; }
.side-item.active { background: #2d3343; color: #fff; }
.side-item.active span { color: #fff; }

/* Top bar */
.page { flex: 1; min-width: 0; display: flex; flex-direction: column; }
.topbar {
  display: flex;
  align-items: center;
  height: 128px;
  padding: 0 64px 0 96px;
  background: #f0f5f9;
  box-shadow: 0 2px 6px rgba(0, 0, 0, .18);
}
.topbar-title { flex: 1; font-size: 48px; line-height: 64px; font-weight: 500; letter-spacing: -1px; }
.avatar {
  width: 48px;
  height: 48px;
  margin-left: 54px;
  padding: 0;
  border-radius: 50%;
  background: #a2bf00;
  box-shadow: 0 0 0 2px #fff;
  color: #fff;
  font-size: 24px;
  line-height: 48px;
}

/* Title and tabs */
main { flex: 1; display: flex; flex-direction: column; }
.title-row { display: flex; align-items: center; padding: 24px 64px 32px 0; }
.back { width: 96px; display: flex; justify-content: center; }
h1 { flex: 1; font-size: 64px; line-height: 80px; font-weight: 700; letter-spacing: -2px; }
.operator {
  display: flex;
  align-items: center;
  justify-content: space-between;
  width: 320px;
  height: 100px;
  padding: 0 34px 0 24px;
  border: 2px solid #1e293b;
  border-radius: 16px;
  background: #0962f8;
  color: #fff;
  letter-spacing: 1px;
}
.tabs { display: flex; padding-left: 120px; }
.tab {
  min-width: 180px;
  padding: 20px 48px;
  border-bottom: 8px solid transparent;
  color: #0962f8;
  text-align: center;
}
.tab.current { color: #1e293b; border-color: #1e293b; }

/* Form panel */
.panel {
  flex: 1;
  margin: 0 64px 0 96px;
  padding-bottom: 48px;
  border-top: 16px solid #e1e8f2;
  border-radius: 32px 32px 0 0;
  background: #f0f5f9;
  display: flex;
  flex-direction: column;
  align-items: center;
}
.section { width: 75%; }
.section + .section { margin-top: 40px; }
h2 {
  padding: 32px;
  border-bottom: 2px solid #0962f8;
  color: #475569;
  font-size: 28px;
  line-height: 42px;
  font-weight: 400;
}
.fields { display: flex; flex-direction: column; gap: 28px; padding: 37px 80px 0; }
.field { display: flex; flex-direction: column; min-width: 0; }
label { margin-bottom: 12px; padding-left: 1px; font-weight: 500; }
.box {
  width: 100%;
  height: 84px;
  padding: 0 32px;
  border: 2px solid #cbd5e1;
  border-radius: 12px;
  background: #fff;
  box-shadow: 0 2px 4px rgba(15, 23, 42, .06);
  color: #374151;
  outline: 0;
}
.date { display: flex; align-items: center; height: 100px; }
.date input { flex: 1; min-width: 0; padding: 0; border: 0; outline: 0; background: none; }
.hint { margin-top: 8px; color: #94a3b8; font-size: 24px; line-height: 32px; font-weight: 500; }
.pair { display: grid; grid-template-columns: 1fr 1fr; gap: 16px; }
.pair.wide-first { grid-template-columns: 8fr 5fr; }
.pair.inset { padding-right: 16px; }
.select-wrap { position: relative; }
select.box { display: block; appearance: none; color: #1e293b; }
.clear { position: absolute; right: 93px; top: 33px; }
.caret { position: absolute; right: 54px; top: 37px; pointer-events: none; }
.find {
  height: 80px;
  margin-top: 4px;
  border-radius: 4px;
  background: #0962f8;
  color: #fff;
  font-weight: 500;
}
.save {
  width: 448px;
  height: 80px;
  margin-top: 72px;
  border-radius: 8px;
  background: #0962f8;
  color: #fff;
  font-weight: 500;
}

/* Map */
.map {
  position: relative;
  width: calc(75% - 160px);
  height: 800px;
  margin-top: 64px;
  overflow: hidden;
}
.map-canvas { width: 100%; height: 100%; }
.water { fill: #90daee; }
.park { fill: #c4efd5; }
.commercial { fill: #f6efdf; }
.rail { fill: none; stroke: #d9dadd; stroke-width: 2; }
.street { fill: none; stroke: #d7dee8; stroke-width: 3; }
.ferry { fill: none; stroke: #55c3e2; stroke-width: 2; stroke-dasharray: 12 5; }
.state-line { fill: none; stroke: #666; stroke-width: 2; stroke-dasharray: 3 4; }
#highways path { vector-effect: non-scaling-stroke; }
.road-casing { fill: none; stroke: #7389bb; stroke-width: 9; stroke-linejoin: round; }
.road-fill { fill: none; stroke: #a9b9d9; stroke-width: 6; stroke-linejoin: round; }

.label { paint-order: stroke; stroke: #fff; stroke-width: 4; stroke-linejoin: round; text-anchor: middle; font-size: 28px; }
.from-start { text-anchor: start; }
.to-end { text-anchor: end; }
.region { fill: #303136; font-size: 18px; font-weight: 500; letter-spacing: 2px; }
.borough { fill: #3c4043; font-size: 23px; font-weight: 500; letter-spacing: 3px; }
.town { fill: #2c2c33; font-weight: 500; }
.city { font-size: 35px; }
.metro { font-size: 53px; }
.state { fill: #3c4043; font-size: 28px; text-anchor: start; }
.green { fill: #188a5c; }
.violet { fill: #8440d6; }
.blue { fill: #1a73e8; }
.airport { fill: #1967d2; }
.slate { fill: #5b7484; }
.island { fill: #202124; font-style: italic; }
.river { fill: #14839a; stroke: none; font-size: 22px; }
.road-name { fill: #27395c; font-size: 22px; }
.shield { fill: #fff; font-size: 18px; font-weight: 700; text-anchor: middle; }
.shield.dark { fill: #333; font-weight: 400; font-size: 20px; }
.small { font-size: 14px; font-weight: 500; }
.oval { fill: #fff; stroke: #666; stroke-width: 2; }
.brand { font-size: 35px; font-weight: 500; paint-order: stroke; stroke: #fff; stroke-width: 2; }

.map-types { position: absolute; left: 20px; top: 20px; display: flex; border-radius: 4px; box-shadow: 0 2px 8px rgba(0, 0, 0, .3); }
.map-types button { height: 80px; padding: 0 45px; background: #fff; color: #565656; font-size: 36px; border-radius: 0 4px 4px 0; }
.map-types .on { color: #000; font-weight: 500; border-radius: 4px 0 0 4px; border-right: 2px solid #eee; }
.map-btn {
  position: absolute;
  right: 20px;
  width: 80px;
  height: 80px;
  padding: 0;
  display: grid;
  place-items: center;
  background: #fff;
  border-radius: 4px;
  box-shadow: 0 2px 8px rgba(0, 0, 0, .3);
}
.full { top: 20px; }
.camera { bottom: 192px; border-radius: 50%; }
.pegman { bottom: 48px; }
.map-legal {
  position: absolute;
  right: 0;
  bottom: 0;
  display: flex;
  gap: 25px;
  padding: 0 12px;
  background: rgba(245, 245, 245, .7);
  color: #000;
  font-size: 20px;
  line-height: 28px;
}
.map-legal a { color: inherit; }
```
